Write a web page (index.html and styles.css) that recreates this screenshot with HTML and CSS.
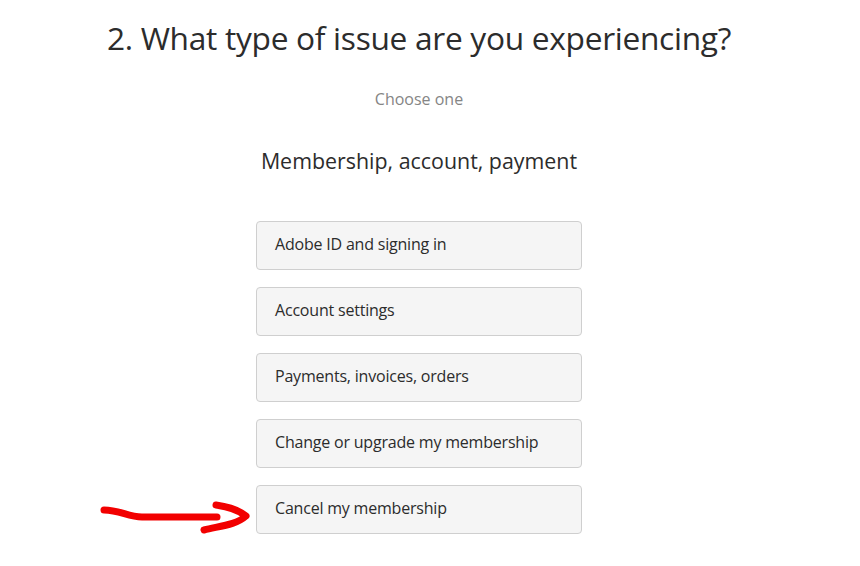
FILE: index.html
```html
<!DOCTYPE html>
<html lang="en">
<head>
<meta charset="utf-8">
<title>Support</title>
<link rel="stylesheet" href="styles.css">
</head>
<body>
<main class="page">
  <h1 class="title">2. What type of issue are you experiencing?</h1>
  <p class="hint">Choose one</p>
  <h2 class="section">Membership, account, payment</h2>
  <ul class="options">
    <li class="option">Adobe ID and signing in</li>
    <li class="option">Account settings</li>
    <li class="option">Payments, invoices, orders</li>
    <li class="option">Change or upgrade my membership</li>
    <li class="option option-last">Cancel my membership
      <svg class="arrow" width="160" height="40" viewBox="0 0 160 40" aria-hidden="true">
        <path d="M4 10 C 20 10, 28 17, 42 17 L 117 17" fill="none" stroke="#f20000" stroke-width="7" stroke-linecap="round"/>
        <path d="M116 5 C 130 7, 140 11, 146 16 C 136 25, 120 26, 104 30" fill="none" stroke="#f20000" stroke-width="7" stroke-linecap="round" stroke-linejoin="round"/>
      </svg>
    </li>
  </ul>
</main>
</body>
</html>
```

FILE: styles.css
```css
html, body {
  margin: 0;
  padding: 0;
  background: #ffffff;
}

body {
  font-family: "Open Sans", "Noto Sans", "Liberation Sans", sans-serif;
  color: #2c2c2c;
}

.page {
  width: 838px;
  display: flex;
  flex-direction: column;
  align-items: center;
}

.title {
  margin: 16px 0 0;
  font-size: 31.7px;
  font-weight: 400;
  letter-spacing: -0.3px;
  line-height: 44px;
  color: #2c2c2c;
}

.hint {
  margin: 28px 0 0;
  font-size: 16px;
  line-height: 22px;
  color: #858585;
  font-weight: 400;
}

.section {
  margin: 36px 0 0;
  font-size: 21.4px;
  line-height: 30px;
  font-weight: 400;
  color: #2c2c2c;
}

.options {
  list-style: none;
  margin: 45px 0 0;
  padding: 0;
  display: flex;
  flex-direction: column;
  gap: 17px;
}

.option {
  position: relative;
  box-sizing: border-box;
  width: 326px;
  height: 49px;
  padding: 0 18px 3px;
  display: flex;
  align-items: center;
  background: #f5f5f5;
  border: 1px solid #cfcfcf;
  border-radius: 4px;
  font-size: 16px;
  color: #2c2c2c;
  letter-spacing: -0.2px;
}

.arrow {
  position: absolute;
  left: -157px;
  top: 14px;
}
```
